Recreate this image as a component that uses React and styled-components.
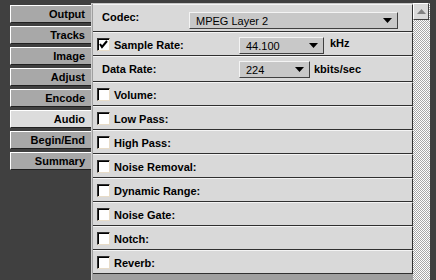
import React from "react";
import styled, { createGlobalStyle } from "styled-components";

const GlobalStyle = createGlobalStyle`
  html, body {
    margin: 0;
    padding: 0;
    background: #404040;
  }
  body {
    font-family: "Liberation Sans", Arial, sans-serif;
    font-size: 11px;
    color: #000;
  }
`;

const TABS = ["Output", "Tracks", "Image", "Adjust", "Encode", "Audio", "Begin/End", "Summary"];

const FILTERS = [
  "Volume:",
  "Low Pass:",
  "High Pass:",
  "Noise Removal:",
  "Dynamic Range:",
  "Noise Gate:",
  "Notch:",
  "Reverb:"
];

const Arrow = () => (
  <svg width="9" height="5" viewBox="0 0 9 5">
    <polygon points="0,0 9,0 4.5,5" fill="#000" />
  </svg>
);

const Check = () => (
  <svg width="11" height="11" viewBox="0 0 11 11">
    <polyline points="2,5 4,8 9,2" fill="none" stroke="#000" strokeWidth="2" />
  </svg>
);

const CheckBox = ({ checked }) => <Box>{checked && <Check />}</Box>;

const Select = ({ value, width, top }) => (
  <SelectBox width={width} top={top}>
    <span>{value}</span>
    <Arrow />
  </SelectBox>
);

const App = () => (
  <>
    <GlobalStyle />
    <Screen>
      <TabColumn>
        {TABS.map(t => (
          <Tab key={t} active={t === "Audio"}>
            {t}
          </Tab>
        ))}
      </TabColumn>
      <Panel>
        <Rows>
          <Row height={28}>
            <Label width={92} indent={5}>Codec:</Label>
            <Select value="MPEG Layer 2" width={209} top={3} />
          </Row>
          <Row height={24}>
            <CheckBox checked />
            <Label width={129}>Sample Rate:</Label>
            <Select value="44.100" width={85} />
            <Unit up>kHz</Unit>
          </Row>
          <Row height={26}>
            <Label width={142} indent={5}>Data Rate:</Label>
            <Select value="224" width={71} />
            <Unit>kbits/sec</Unit>
          </Row>
          {FILTERS.map(f => (
            <Row key={f} height={24}>
              <CheckBox />
              <Label>{f}</Label>
            </Row>
          ))}
        </Rows>
        <ScrollBar>
          <ScrollButton>
            <svg width="9" height="5" viewBox="0 0 9 5">
              <polygon points="0,5 9,5 4.5,0" fill="#808080" />
            </svg>
          </ScrollButton>
        </ScrollBar>
      </Panel>
    </Screen>
  </>
);

const Screen = styled.div`
  display: flex;
  width: 436px;
  height: 280px;
  overflow: hidden;
  background: #404040;
`;

const TabColumn = styled.div`
  width: 81px;
  padding: 5px 0 0 10px;
  display: flex;
  flex-direction: column;
  gap: 3px;
  flex-shrink: 0;
`;

const Tab = styled.div`
  box-sizing: border-box;
  height: 18px;
  border-top: 1px solid #fff;
  border-left: 1px solid #fff;
  border-bottom: 1px solid #202020;
  background: ${p => (p.active ? "#dcdcdc" : "#a8a8a8")};
  font-weight: bold;
  font-size: 11px;
  line-height: 16px;
  text-align: right;
  padding-right: 6px;
`;

const Panel = styled.div`
  display: flex;
  margin-top: 3px;
  width: 339px;
  height: 277px;
  border-top: 1px solid #c8c8c8;
  border-left: 1px solid #d0d0d0;
  box-sizing: border-box;
  background: #a0a0a0;
`;

const Rows = styled.div`
  width: 320px;
  margin-left: 1px;
  display: flex;
  flex-direction: column;
`;

const Row = styled.div`
  box-sizing: border-box;
  height: ${p => p.height}px;
  display: flex;
  align-items: flex-start;
  padding: 4px 0 0 4px;
  background: #d9d9d9;
  border-top: 1px solid #f4f4f4;
  border-bottom: 1px solid #303030;
  border-right: 1px solid #303030;
`;

const Label = styled.div`
  font-weight: bold;
  font-size: 11px;
  line-height: 14px;
  margin-top: 1px;
  padding-left: ${p => p.indent || 4}px;
  width: ${p => (p.width ? `${p.width}px` : "auto")};
  box-sizing: border-box;
  white-space: nowrap;
  flex-shrink: 0;
`;

const Box = styled.div`
  width: 13px;
  height: 13px;
  flex-shrink: 0;
  box-sizing: border-box;
  margin-top: 1px;
  background: #fff;
  border-top: 1px solid #303030;
  border-left: 1px solid #303030;
  border-right: 1px solid #e8dcc8;
  border-bottom: 1px solid #e8dcc8;
  box-shadow: inset 1px 1px 0 #000;
  display: flex;
  align-items: center;
  justify-content: center;
`;

const SelectBox = styled.div`
  width: ${p => p.width}px;
  height: 17px;
  box-sizing: border-box;
  margin-top: ${p => p.top || 0}px;
  display: flex;
  align-items: center;
  justify-content: space-between;
  padding: 0 5px 0 6px;
  background: #c8c8c8;
  border-top: 1px solid #f4f4f4;
  border-left: 1px solid #f4f4f4;
  border-right: 1px solid #404040;
  border-bottom: 1px solid #404040;
  font-size: 11px;
  flex-shrink: 0;
`;

const Unit = styled.div`
  font-weight: bold;
  font-size: 11px;
  line-height: 14px;
  margin-top: ${p => (p.up ? -1 : 1)}px;
  padding-left: ${p => (p.up ? 6 : 4)}px;
`;

const ScrollBar = styled.div`
  width: 17px;
  align-self: stretch;
  margin-top: -1px;
  background-color: #fff;
  background-image: conic-gradient(#fff 25%, #a8a8a8 0 50%, #fff 0 75%, #a8a8a8 0);
  background-size: 2px 2px;
`;

const ScrollButton = styled.div`
  width: 16px;
  height: 17px;
  box-sizing: border-box;
  background: #d9d9d9;
  border-top: 1px solid #fff;
  border-left: 1px solid #fff;
  border-right: 1px solid #404040;
  border-bottom: 1px solid #404040;
  display: flex;
  align-items: center;
  justify-content: center;
`;

export default App;
